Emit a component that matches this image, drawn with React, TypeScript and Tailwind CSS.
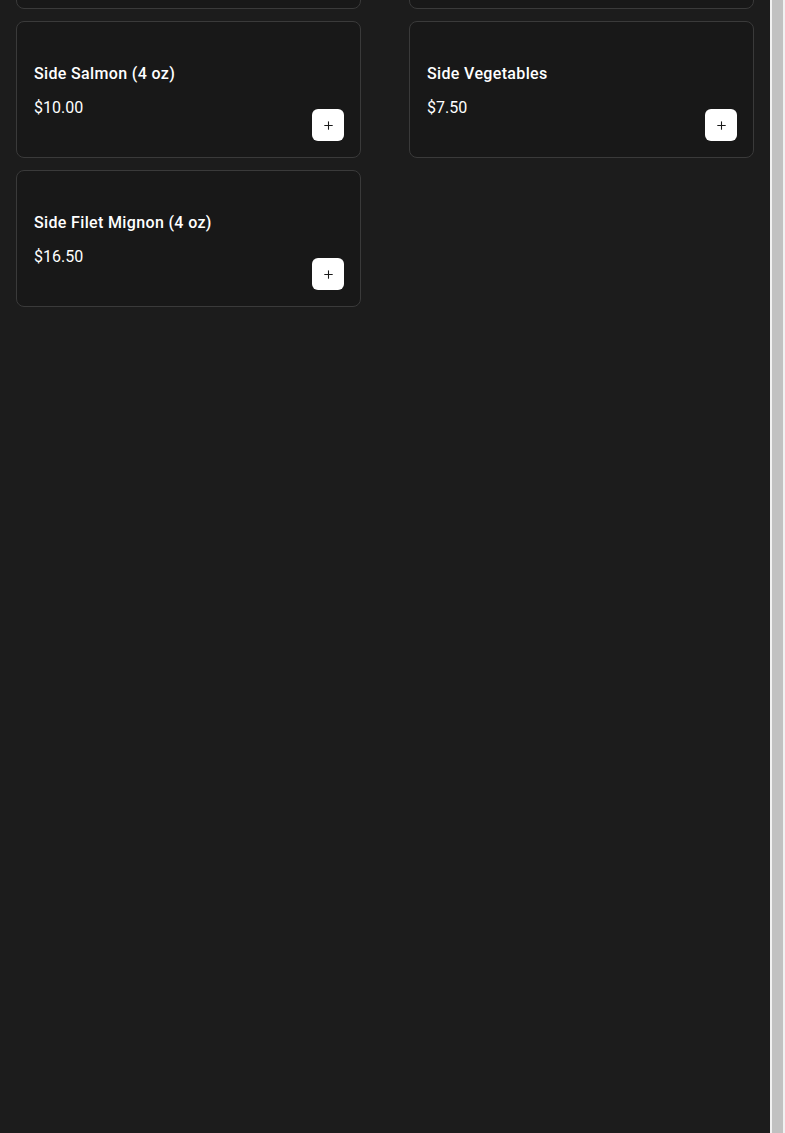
import { Plus } from "lucide-react";

type Item = { name: string; price: string };

const items: Item[] = [
  { name: "Side Shrimp (4 pcs)", price: "$9.00" },
  { name: "Side Chicken (4 oz)", price: "$6.50" },
  { name: "Side Salmon (4 oz)", price: "$10.00" },
  { name: "Side Vegetables", price: "$7.50" },
  { name: "Side Filet Mignon (4 oz)", price: "$16.50" },
];

function MenuCard({ item }: { item: Item }) {
  return (
    <div className="flex h-[137px] justify-between rounded-lg border border-[#3a3a3a] bg-[#181818] py-4 pr-4 pl-[17px]">
      <div className="flex flex-col gap-2.5 pt-6">
        <h3 className="text-base leading-6 font-medium tracking-[0.35px] text-white">{item.name}</h3>
        <p className="text-base leading-6 text-white">{item.price}</p>
      </div>
      <button
        type="button"
        className="grid size-8 place-items-center self-end rounded-md bg-white text-[#1a1a1a]"
      >
        <Plus size={13} strokeWidth={2} />
      </button>
    </div>
  );
}

export default function App() {
  return (
    <div
      className="flex h-[1133px] overflow-hidden bg-[#1c1c1c]"
      style={{ fontFamily: "Roboto, 'Noto Sans', sans-serif" }}
    >
      <main className="w-[770px] overflow-hidden">
        {/* list is scrolled: first row sits mostly above the fold */}
        <div className="mt-[-128px] grid grid-cols-2 gap-x-12 gap-y-3 px-4">
          {items.map((item) => (
            <MenuCard key={item.name} item={item} />
          ))}
        </div>
      </main>
      <div className="w-[15px] bg-[#f1f1f1] px-[2px]">
        <div className="h-full bg-[#c1c1c1]" />
      </div>
    </div>
  );
}
